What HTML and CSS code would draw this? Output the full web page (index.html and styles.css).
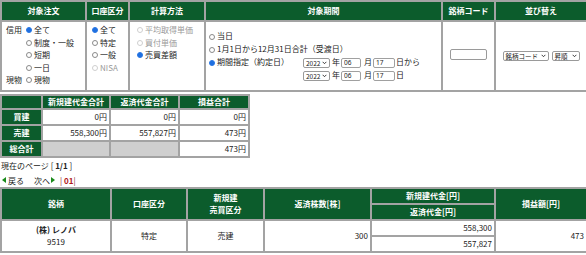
FILE: index.html
```html
<!DOCTYPE html>
<html lang="ja">
<head>
<meta charset="utf-8">
<title>損益照会</title>
<link rel="stylesheet" href="styles.css">
</head>
<body>
<table class="filter">
  <colgroup>
    <col class="fc1"><col class="fc2"><col class="fc3"><col class="fc4"><col class="fc5"><col class="fc6">
  </colgroup>
  <thead>
    <tr><th>対象注文</th><th>口座区分</th><th>計算方法</th><th>対象期間</th><th>銘柄コード</th><th>並び替え</th></tr>
  </thead>
  <tbody>
    <tr>
      <td class="top">
        <div class="order-grid">
          <span class="glabel">信用</span><label class="opt"><i class="rd on"></i>全て</label>
          <span></span><label class="opt"><i class="rd"></i>制度・一般</label>
          <span></span><label class="opt"><i class="rd"></i>短期</label>
          <span></span><label class="opt"><i class="rd"></i>一日</label>
          <span class="glabel">現物</span><label class="opt"><i class="rd"></i>現物</label>
        </div>
      </td>
      <td class="top">
        <div class="list acct">
          <label class="opt"><i class="rd on"></i>全て</label>
          <label class="opt"><i class="rd"></i>特定</label>
          <label class="opt"><i class="rd"></i>一般</label>
          <label class="opt dis"><i class="rd"></i>NISA</label>
        </div>
      </td>
      <td class="top">
        <div class="list calc">
          <label class="opt dis"><i class="rd"></i>平均取得単価</label>
          <label class="opt dis"><i class="rd"></i>買付単価</label>
          <label class="opt"><i class="rd on"></i>売買差額</label>
        </div>
      </td>
      <td class="mid">
        <div class="period">
          <label class="opt full"><i class="rd"></i>当日</label>
          <label class="opt full"><i class="rd"></i>1月1日から12月31日合計（受渡日）</label>
          <label class="opt"><i class="rd on"></i>期間指定（約定日）</label>
          <span class="dates"><span class="sel y">2022<svg class="chev" viewBox="0 0 8 5"><path d="M1 1l3 3 3-3" fill="none" stroke="#222" stroke-width="1.4"/></svg></span>年<input class="num" value="06">月<input class="num d" value="17">日から</span>
          <span></span>
          <span class="dates"><span class="sel y">2022<svg class="chev" viewBox="0 0 8 5"><path d="M1 1l3 3 3-3" fill="none" stroke="#222" stroke-width="1.4"/></svg></span>年<input class="num" value="06">月<input class="num d" value="17">日</span>
        </div>
      </td>
      <td class="mid center">
        <input class="code">
      </td>
      <td class="mid center">
        <span class="sort"><span class="sel s1">銘柄コード<svg class="chev" viewBox="0 0 8 5"><path d="M1 1l3 3 3-3" fill="none" stroke="#222" stroke-width="1.4"/></svg></span><span class="sel s2">昇順<svg class="chev" viewBox="0 0 8 5"><path d="M1 1l3 3 3-3" fill="none" stroke="#222" stroke-width="1.4"/></svg></span></span>
      </td>
    </tr>
  </tbody>
</table>

<table class="summary">
  <colgroup><col class="sc1"><col class="sc2"><col class="sc3"><col class="sc4"></colgroup>
  <thead>
    <tr><th></th><th>新規建代金合計</th><th>返済代金合計</th><th>損益合計</th></tr>
  </thead>
  <tbody>
    <tr><th>買建</th><td>0円</td><td>0円</td><td>0円</td></tr>
    <tr><th>売建</th><td>558,300円</td><td>557,827円</td><td>473円</td></tr>
    <tr><th>総合計</th><td class="blank"></td><td class="blank"></td><td>473円</td></tr>
  </tbody>
</table>

<div class="page-info">現在のページ [ <b>1/1</b> ]</div>
<div class="pager">
  <span class="prev"><i class="tri-l"></i>戻る</span>
  <span class="next">次へ<i class="tri-r"></i></span>
  <span class="pages">| <b>01</b>|</span>
</div>

<table class="result">
  <colgroup><col class="rc1"><col class="rc2"><col class="rc3"><col class="rc4"><col class="rc5"><col class="rc6"></colgroup>
  <thead>
    <tr>
      <th rowspan="2">銘柄</th>
      <th rowspan="2">口座区分</th>
      <th rowspan="2">新規建<br>売買区分</th>
      <th rowspan="2">返済株数[株]</th>
      <th class="sub">新規建代金[円]</th>
      <th rowspan="2">損益額[円]</th>
    </tr>
    <tr><th class="sub">返済代金[円]</th></tr>
  </thead>
  <tbody>
    <tr>
      <td rowspan="2" class="center"><b>(株) レノバ</b><br>9519</td>
      <td rowspan="2" class="center">特定</td>
      <td rowspan="2" class="center">売建</td>
      <td rowspan="2" class="num-cell">300</td>
      <td class="num-cell subd">558,300</td>
      <td rowspan="2" class="num-cell">473</td>
    </tr>
    <tr><td class="num-cell subd">557,827</td></tr>
  </tbody>
</table>
</body>
</html>
```
FILE: styles.css
```css
* { box-sizing: border-box; }
body {
  margin: 0;
  width: 586px;
  font-family: "Noto Sans CJK JP", "Noto Sans", sans-serif;
  font-size: 8px;
  color: #222;
  background: #fff;
}
table { border-collapse: collapse; table-layout: fixed; }
th, td { border: 2px solid #a3a3a3; padding: 0; }
th {
  background: #0c5c2c;
  color: #fff;
  font-weight: bold;
  text-align: center;
  line-height: 12px;
}
.center { text-align: center; }
.top { vertical-align: top; }
.mid { vertical-align: middle; }

/* top filter table */
.filter { width: 586px; }
.fc1 { width: 85px; } .fc2 { width: 43px; } .fc3 { width: 76px; }
.fc4 { width: 237px; } .fc5 { width: 53px; } .fc6 { width: 92px; }
.filter thead th { height: 20px; }
.filter tbody td { height: 70px; line-height: 12.5px; }

.opt { display: flex; align-items: center; white-space: nowrap; }
.opt.dis { color: #9a9a9a; }
.rd {
  display: inline-block;
  width: 6px; height: 6px;
  border: 1px solid #8a8a8a;
  border-radius: 50%;
  margin-right: 2px;
  flex: none;
}
.rd.on { background: #1f6fe0; border-color: #2a78e4; }
.opt.dis .rd { border-color: #cfcfcf; }

.order-grid {
  display: grid;
  grid-template-columns: 20px auto;
  padding: 2px 0 0 4px;
}
.glabel { line-height: 12.5px; }
.list { padding: 2px 0 0 5px; }
.calc { padding-left: 7px; }

.period {
  display: grid;
  grid-template-columns: 94px auto;
  grid-auto-rows: 13px;
  padding-left: 3px;
  align-items: center;
}
.period .full { grid-column: 1 / 3; }
.dates { display: flex; align-items: center; white-space: nowrap; }
.sel {
  display: inline-flex;
  align-items: center;
  justify-content: space-between;
  height: 10px;
  border: 1px solid #9a9a9a;
  border-radius: 2px;
  background: #fff;
  font-size: 6.5px;
  line-height: 8px;
  padding: 0 2px;
  color: #222;
}
.sel.y { width: 27px; margin-right: 2px; }
.chev { width: 5px; height: 3.5px; margin-left: 1px; }
.num {
  width: 20px; height: 10px;
  border: 1px solid #a0a0a0;
  border-radius: 2px;
  font: 6.5px "Noto Sans", sans-serif;
  padding: 0 2px;
  margin: 0 3px 0 1px;
  color: #222;
}
.num.d { width: 22px; margin-right: 1px; }
.code {
  width: 37px; height: 11px;
  border: 1px solid #9a9a9a;
  border-radius: 2px;
  padding: 0;
}
.sort { display: inline-flex; gap: 3px; }
.sel.s1 { width: 46px; }
.sel.s2 { width: 28px; }

/* summary table */
.summary { width: 248px; margin-top: 2px; }
.sc1 { width: 41px; } .sc2 { width: 68px; } .sc3 { width: 69px; } .sc4 { width: 70px; }
.summary thead th { height: 14px; }
.summary tbody th, .summary tbody td { height: 16px; }
.summary td { text-align: right; padding-right: 2px; line-height: 12px; }
.summary td.blank { background: #cfcfcf; }

.page-info { line-height: 14px; margin-top: 1px; padding-left: 1px; }
.page-info b { font-weight: bold; }
.pager { display: flex; align-items: center; height: 14px; padding-left: 2px; }
.prev { display: inline-flex; align-items: center; }
.next { display: inline-flex; align-items: center; margin-left: 10px; }
.tri-l, .tri-r { display: inline-block; width: 0; height: 0; border-top: 3px solid transparent; border-bottom: 3px solid transparent; }
.tri-l { border-right: 4px solid #1a8a1a; margin-right: 2px; }
.tri-r { border-left: 4px solid #1a8a1a; margin-left: 1px; }
.pages { margin-left: 5px; color: #8a1a1a; }
.pages b { color: #b01818; }

/* result table */
.result { width: 586px; }
.rc1 { width: 110px; } .rc2 { width: 76px; } .rc3 { width: 77px; }
.rc4 { width: 107px; } .rc5 { width: 124px; } .rc6 { width: 92px; }
.result th { height: 16px; line-height: 12px; }
.result td { height: 16px; line-height: 12.5px; }
.num-cell { text-align: right; padding-right: 2px; }
```
